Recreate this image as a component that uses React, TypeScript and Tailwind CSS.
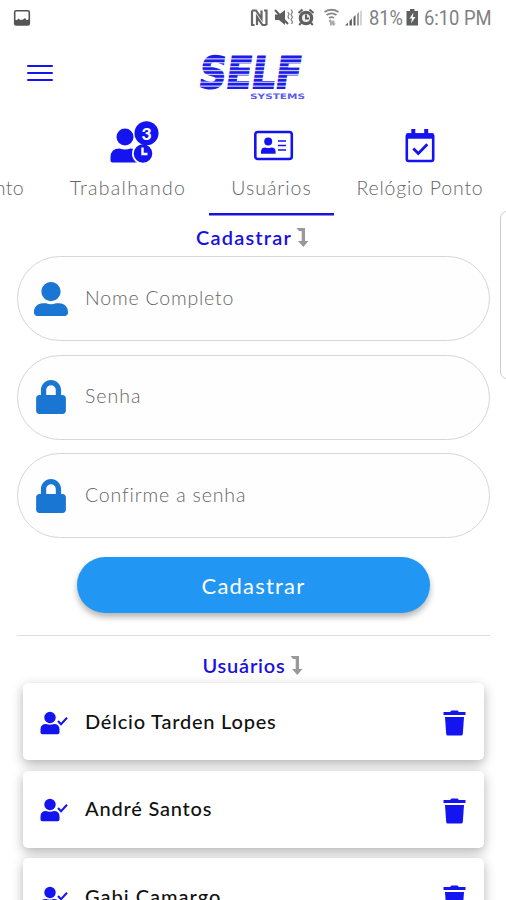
import { useState } from 'react'
import { FaLock, FaUserAlt } from 'react-icons/fa'

type User = { id: number; name: string; cls: string }

const users: User[] = [
  { id: 1, name: 'Délcio Tarden Lopes', cls: 'tracking-[0.77px]' },
  { id: 2, name: 'André Santos', cls: 'tracking-[0.8px]' },
  { id: 3, name: 'Gabi Camargo', cls: 'tracking-[1px]' },
]

function StatusBar() {
  return (
    <div className="h-9 flex items-center justify-between pl-[13px] pr-[13px] text-[#666]">
      <svg width="18" height="18" viewBox="0 0 18 18">
        <rect x="1.7" y="1.7" width="14.6" height="14.2" rx="1.5" fill="#fff" stroke="#555" strokeWidth="1.6" />
        <path d="M2 11 L4 11 L5.5 9.5 L7.5 11 L10 10.5 L12 9 L13.5 11 L16 10.5 V16 H2 Z" fill="#555" />
      </svg>
      <svg width="243" height="28" viewBox="250 4 243 28" className="overflow-visible" fill="#5f5f5f">
        {/* nfc */}
        <path d="M252 10.500 h4 l5.500 8 v-8 M252 10.500 v14.500 h2.500 M266.500 25 h-4 l-5.500 -8 v8 M266.500 25 v-14.500 h-2.500" fill="none" stroke="#666" strokeWidth="2.200" />
        {/* muted + vibrate */}
        <path d="M275 14.500 h4 l6 -4.500 v15 l-6 -5 h-4z" />
        <path d="M275 10 L288 24" stroke="#5f5f5f" strokeWidth="2" />
        <path d="M291 9.500 l1.500 2.500 l-1.500 2.500 l1.500 2.500 l-1.500 2.500 l1.500 2.500 l-1 2 M288 12 l1 2 l-1 2.500 l1 2.500" fill="none" stroke="#888" strokeWidth="1.300" />
        {/* alarm */}
        <circle cx="306" cy="18" r="7.300" />
        <circle cx="306" cy="18" r="4" fill="#eee" />
        <path d="M306 14.500 v4 h3 M298.500 13 l4 -3.400 M313.500 13 l-4 -3.400 M301 23 l-1.800 2 M311 23 l1.800 2" fill="none" stroke="#5f5f5f" strokeWidth="2" />
        {/* wifi */}
        <path d="M324.500 12 q7 -4.500 14 0 M326.500 15 q5 -3.400 10 0 M329 18 q2.500 -1.600 5 0" fill="none" stroke="#8a8a8a" strokeWidth="1.800" />
        <path d="M328.500 21 l1.700 -2 l1.700 2 v4.500 h-2 v-3z M332.500 20.500 h2 v3 h1.500 l-2.500 2.500 l-2 -2.500z" fill="#aaa" />
        {/* signal */}
        <path d="M345 25.500 l3 -3 v3z M349.500 21 l2.400 -2.400 v7 h-2.400z M353.500 17 l2 -2 v10.500 h-2z" />
        <path d="M357 14 l2 -2 v13.500 h-2z" fill="#a0a0a0" />
        <path d="M360 11.500 l2 -1.500 v15.500 h-2z" fill="#d5d5d5" />
        <text x="369" y="25" textLength="34" lengthAdjust="spacingAndGlyphs" fontFamily="Roboto, sans-serif" fontSize="20" fill="#808080">81%</text>
        {/* battery */}
        <path d="M410 9 h4.500 v2 h3.500 v14.500 h-11.500 v-14.500 h3.500z" />
        <path d="M413.500 12.500 l-4 6 h2.500 l-1 5 l4.500 -6.500 h-2.800z" fill="#fff" />
        <text x="424" y="25" textLength="67.500" lengthAdjust="spacingAndGlyphs" fontFamily="Roboto, sans-serif" fontSize="20" fill="#808080">6:10 PM</text>
      </svg>
    </div>
  )
}

function Logo() {
  return (
    <svg width="112" height="54" viewBox="0 0 112 54" className="overflow-visible">
      <g transform="translate(0.500 38) skewX(-8)">
        <text
          x="0" y="0" textLength="102" lengthAdjust="spacingAndGlyphs"
          fontFamily="DejaVu Sans, sans-serif" fontSize="43.500" fontWeight="700" fill="#1c1ce8" stroke="#1c1ce8" strokeWidth="1.800"
        >
          SELF
        </text>
      </g>
      {[8.2, 12.1, 16, 19.900, 23.800, 27.700, 31.600, 35.500].map(y => (
        <rect key={y} x="0" y={y} width="112" height="1.300" fill="#fff" opacity="0.75" />
      ))}
      <text
        x="53" y="49" textLength="55" lengthAdjust="spacingAndGlyphs"
        fontFamily="DejaVu Sans, sans-serif" fontSize="7.500" fontWeight="700" fill="#5a5af2"
      >
        SYSTEMS
      </text>
    </svg>
  )
}

function WorkingIcon() {
  return (
    <svg width="50" height="42" viewBox="0 0 50 42" fill="#1414f0">
      <circle cx="15" cy="16" r="8.500" />
      <path d="M0.500 39.500 v-3 q0 -9 9 -9 q5.500 2 11 0 q9 0 9 9 v5 h-27 q-2 0 -2 -2z" />
      <circle cx="33" cy="32.500" r="11" fill="#fff" />
      <circle cx="33" cy="32.500" r="9.300" />
      <circle cx="36.500" cy="12.200" r="12" />
      <path d="M32.500 26.500 v6.500 h5" fill="none" stroke="#fff" strokeWidth="2.400" />
      <text x="36.500" y="18.500" textAnchor="middle" fontFamily="Lato, sans-serif" fontSize="17.500" fontWeight="900" fill="#fff">3</text>
    </svg>
  )
}

function CardIcon() {
  return (
    <svg width="40" height="42" viewBox="0 0 40 42" fill="#1414f0">
      <rect x="1.300" y="11" width="36.500" height="27" rx="2.500" fill="none" stroke="#1414f0" strokeWidth="2.600" />
      <circle cx="14.200" cy="20.500" r="4" />
      <path d="M7 32.800 v-2 q0 -4.300 4.300 -4.300 q3 1 6 0 q4.300 0 4.300 4.300 v2z" />
      <path d="M24 20 h8 M24 24.500 h8 M24 29 h8" stroke="#1414f0" strokeWidth="1.600" />
    </svg>
  )
}

function CalendarIcon() {
  return (
    <svg width="30" height="42" viewBox="0 0 30 42" fill="none" stroke="#1414f0">
      <rect x="1.800" y="13.500" width="26.400" height="26.500" rx="2" strokeWidth="2.600" />
      <path d="M1.500 15 h27" strokeWidth="5.500" />
      <path d="M8.300 8 v6 M21.200 8 v6" strokeWidth="4" />
      <path d="M8.300 27.500 l5 5 l9 -9.300" strokeWidth="2.800" />
    </svg>
  )
}

function DownArrow() {
  return (
    <svg width="13" height="21" viewBox="0 0 13 21" className="shrink-0">
      <path d="M0.500 1 H9 V14 H12.500 L7.300 20 L2 14 H5.700 V4 H3 Z" fill="#999" />
    </svg>
  )
}

function UserCheckIcon() {
  return (
    <svg width="29" height="24" viewBox="0 0 29 24" className="mt-0.5" fill="#1414f0">
      <circle cx="10" cy="6.500" r="5.700" />
      <path d="M0.500 21.500 v-3 q0 -5.500 5.500 -5.500 q4 1.500 8 0 q5.500 0 5.500 5.500 v3 q0 1.800 -1.800 1.800 h-15.400 q-1.800 0 -1.800 -1.800z" />
      <path d="M18 10 l3 3.200 l6 -6.500" fill="none" stroke="#1414f0" strokeWidth="2" />
    </svg>
  )
}

function TrashIcon() {
  return (
    <svg width="23" height="26" viewBox="0 0 23 26" fill="#1414f0">
      <path d="M0.500 2 H7 L8.500 0.500 H14.500 L16 2 H22.500 V5 H0.500Z" />
      <path d="M2 7 H21 L19.800 24 Q19.600 25.500 18.200 25.500 H4.800 Q3.400 25.500 3.200 24Z" />
    </svg>
  )
}

export default function App() {
  const [tab, setTab] = useState('usuarios')
  const [form, setForm] = useState({ nome: '', senha: '', confirma: '' })

  function update(field: string, value: string) {
    setForm(prev => ({ ...prev, [field]: value }))
  }

  const tabCls = 'flex flex-col items-center h-24 shrink-0 text-[19.5px] leading-6 text-[#666] font-light'
  const fieldCls = 'h-[85px] flex items-center rounded-full border border-[#d3d8d6] bg-[#fefefe] pl-4'
  const inputCls = 'flex-1 min-w-0 ml-[17px] mr-10 pb-0.5 bg-transparent text-[19.5px] font-light text-[#555] placeholder-[#666] outline-none'
  const headingCls = 'flex items-center justify-center pr-0.5 text-[20px] leading-6 font-semibold text-[#1a10e0]'

  return (
    <div className="relative h-[900px] w-[506px] overflow-hidden bg-white font-[Lato,sans-serif]">
      <StatusBar />

      <header className="h-[76px] grid grid-cols-3 items-start">
        <button className="ml-[27px] mt-[29px] w-[26px] flex flex-col gap-[5px]" aria-label="Menu">
          <span className="h-[2px] w-full rounded bg-[#1414f0]" />
          <span className="h-[2px] w-full rounded bg-[#1414f0]" />
          <span className="h-[2px] w-full rounded bg-[#1414f0]" />
        </button>
        <div className="mt-[14px] ml-[28px]"><Logo /></div>
      </header>

      <nav className="mt-[9px] flex">
        <button className={`${tabCls} w-[34px] items-end pr-[10px] pt-[55px]`}>
          <span className="tracking-[0.4px]">nto</span>
        </button>
        <button className={`${tabCls} w-[187px]`} onClick={() => setTab('trabalhando')}>
          <span className="ml-[15px]"><WorkingIcon /></span>
          <span className="mt-[13px] ml-px tracking-[1.3px]">Trabalhando</span>
        </button>
        <button className={`${tabCls} w-[101px]`} onClick={() => setTab('usuarios')}>
          <span className="ml-1"><CardIcon /></span>
          <span className="mt-[13px] tracking-[1px]">Usuários</span>
          {tab === 'usuarios' && <span className="mt-[13px] h-[2px] w-[125px] shrink-0 border-b border-[#8f8aea] bg-[#1a10e0] box-content" />}
        </button>
        <button className={`${tabCls} -ml-0.5 w-[200px]`} onClick={() => setTab('relogio')}>
          <CalendarIcon />
          <span className="mt-[13px] tracking-[0.8px]">Relógio Ponto</span>
        </button>
      </nav>

      <main className="pl-[17px] pr-4">
        <h2 className={`${headingCls} mt-2 gap-1`}>
          <span className="tracking-[1.200px]">Cadastrar</span>
          <DownArrow />
        </h2>

        <form className="mt-[7px] flex flex-col gap-[13.500px]" onSubmit={e => e.preventDefault()}>
          <div className={fieldCls}>
            <FaUserAlt size={34} color="#1976d2" />
            <input className={`${inputCls} tracking-[0.8px]`} placeholder="Nome Completo" value={form.nome} onChange={e => update('nome', e.target.value)} />
          </div>
          <div className={fieldCls}>
            <FaLock size={34} color="#1976d2" />
            <input type="password" className={`${inputCls} tracking-[1px]`} placeholder="Senha" value={form.senha} onChange={e => update('senha', e.target.value)} />
          </div>
          <div className={fieldCls}>
            <FaLock size={34} color="#1976d2" />
            <input type="password" className={`${inputCls} tracking-[0.85px]`} placeholder="Confirme a senha" value={form.confirma} onChange={e => update('confirma', e.target.value)} />
          </div>
          <button type="submit" className="mt-[5.500px] h-14 w-[353px] self-center rounded-full bg-[#2196f3] text-[22px] tracking-[1.200px] text-white shadow-[0_4px_6px_rgba(0,0,0,0.3)]">
            Cadastrar
          </button>
        </form>

        <hr className="mt-[22px] border-t-[1.500px] border-[#dedede]" />

        <h2 className={`${headingCls} mt-[17px] gap-1`}>
          <span className="tracking-[0.8px]">Usuários</span>
          <DownArrow />
        </h2>

        <ul className="mx-[6px] mt-[6px] flex flex-col gap-[10.500px]">
          {users.map(u => (
            <li key={u.id} className="flex h-[77px] shrink-0 items-center rounded-[5px] bg-white pl-[17px] pr-[18px] shadow-[0_4px_12px_rgba(0,0,0,0.3)]">
              <UserCheckIcon />
              <span className={`ml-4 flex-1 pb-0.5 text-[20px] font-medium text-[#111] ${u.cls}`}>{u.name}</span>
              <span className="mt-[3px]"><TrashIcon /></span>
            </li>
          ))}
        </ul>
      </main>

      {/* edge panel handle */}
      <div className="absolute left-[500px] top-[211px] h-[168px] w-5 rounded-[7px] border-[1.500px] border-[#ccc] bg-white" />
    </div>
  )
}
